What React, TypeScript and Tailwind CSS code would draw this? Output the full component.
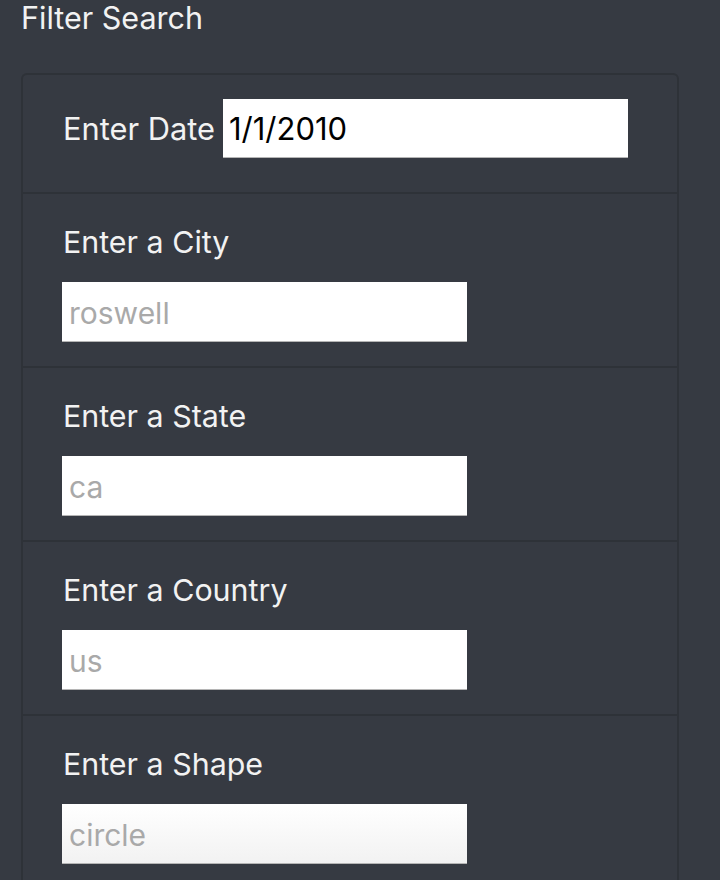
import React from "react";

const fields = [
  { label: "Enter a City", placeholder: "roswell" },
  { label: "Enter a State", placeholder: "ca" },
  { label: "Enter a Country", placeholder: "us" },
  { label: "Enter a Shape", placeholder: "circle" },
];

const App: React.FC = () => {
  return (
    <div
      className="w-[720px] h-[880px] overflow-hidden bg-[#363a42] text-[#f2f2f2]"
      style={{ fontFamily: "Inter, 'Liberation Sans', sans-serif" }}
    >
      <h4 className="pl-[21px] pt-[1px] text-[30.5px] leading-[34px] font-normal">Filter Search</h4>

      <ul className="ml-[21px] mt-[38px] w-[658px] rounded-md border-2 border-[#2e3238]">
        <li className="flex items-start h-[119px] border-b-2 border-[#2e3238] pl-[40px] pt-[24px]">
          <label className="text-[30.8px] leading-[59px] mr-[8px]">Enter Date</label>
          <input
            type="text"
            defaultValue="1/1/2010"
            className="w-[405px] h-[59px] bg-white text-black text-[31px] px-[6px] outline-none border-b border-[#b5b5b5]"
          />
        </li>
        {fields.map((f, i) => (
          <li
            key={f.label}
            className={`h-[174px] pl-[39px] pt-[31px] ${i < fields.length - 1 ? "border-b-2 border-[#2e3238]" : ""}`}
          >
            <label className="block pl-[1px] text-[30.4px] leading-[34px]">{f.label}</label>
            <input
              type="text"
              placeholder={f.placeholder}
              className={`mt-[23px] w-[405px] h-[60px] pt-[3px] text-black text-[30px] px-[7px] outline-none border-b border-[#b5b5b5] placeholder:text-[#a9a9a9] ${
                i === fields.length - 1 ? "bg-gradient-to-b from-white to-[#f2f2f2]" : "bg-white"
              }`}
            />
          </li>
        ))}
      </ul>
    </div>
  );
};

export default App;
